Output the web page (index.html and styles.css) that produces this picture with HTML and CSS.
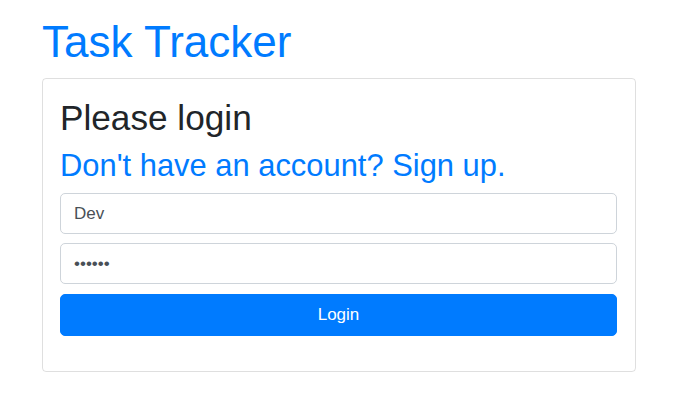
FILE: index.html
```html
<!DOCTYPE html>
<html>
<head>
<meta charset="utf-8">
<link rel="stylesheet" href="styles.css">
</head>
<body>
<div class="container">
  <h1 class="title">Task Tracker</h1>
  <div class="card">
    <h2 class="heading">Please login</h2>
    <h3 class="signup"><a href="#">Don't have an account? Sign up.</a></h3>
    <form class="form">
      <input class="field" type="text" value="Dev">
      <input class="field" type="password" value="secret">
      <button class="btn" type="button">Login</button>
    </form>
  </div>
</div>
</body>
</html>
```

FILE: styles.css
```css
* { box-sizing: border-box; }
body {
  margin: 0;
  font-family: "Liberation Sans", Arial, sans-serif;
  color: #212529;
  background: #fff;
}
.container {
  padding: 16px 0 0 42px;
  width: 636px;
}
.title {
  margin: 0 0 9px;
  font-size: 44px;
  font-weight: 400;
  line-height: 1.2;
  color: #007bff;
}
.card {
  border: 1px solid rgba(0,0,0,.125);
  border-radius: 4px;
  padding: 18px 18px 35px 17px;
}
.heading {
  margin: 0 0 8px;
  font-size: 35.2px;
  font-weight: 400;
  line-height: 1.2;
}
.signup {
  margin: 0 0 9px;
  font-size: 30.9px;
  font-weight: 400;
  line-height: 1.2;
}
.signup a { color: #007bff; text-decoration: none; }
.form {
  display: flex;
  flex-direction: column;
  gap: 9px;
}
.field {
  display: block;
  width: 100%;
  height: 41px;
  padding: 6px 13px;
  font-family: inherit;
  font-size: 17px;
  color: #495057;
  border: 1px solid #ced4da;
  border-radius: 5px;
  background: #fff;
}
.btn {
  display: block;
  width: 100%;
  height: 42px;
  margin-top: 1px;
  font-family: inherit;
  font-size: 17px;
  color: #fff;
  background: #007bff;
  border: 1px solid #007bff;
  border-radius: 5px;
}
```
